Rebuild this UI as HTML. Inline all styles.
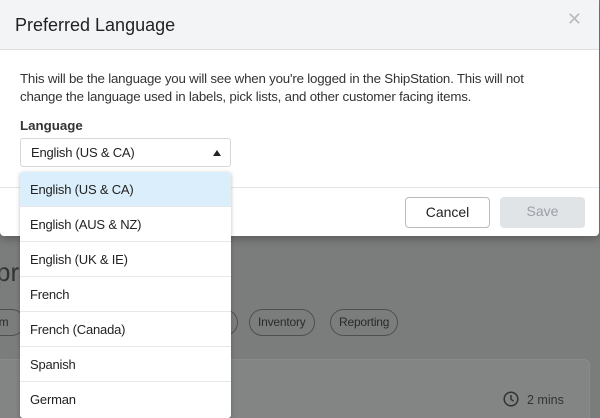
<!DOCTYPE html>
<html style="overflow:hidden;width:600px;height:418px"><head><style>
*{box-sizing:border-box;margin:0;padding:0}
body{width:600px;height:418px;overflow:hidden;background:#7b7c7c;font-family:"Liberation Sans",sans-serif;position:relative;color:#222}
.bgt{position:absolute;color:#333}
.pill{position:absolute;top:309px;height:27px;border:1px solid #4e4f50;border-radius:14px;font-size:12px;line-height:25px;padding:0 8px;color:#2a2a2a;letter-spacing:-0.2px}
.card{position:absolute;left:-10px;top:359px;width:600px;height:59px;background:#838484;border:1px solid #8a8b8b;border-bottom:none;border-radius:6px 6px 0 0}
.modal{position:absolute;left:0;top:0;width:599px;height:236px;background:#fff;border-radius:0 0 4px 4px;box-shadow:0 2px 10px rgba(0,0,0,.3)}
.hdr{height:50px;background:#f3f4f5;border-bottom:1px solid #dcdfe2;padding:15px 15px;font-size:18px;color:#222}
.x{position:absolute;right:17px;top:9px;font-size:18px;color:#b8bcc0}
.txt{position:absolute;left:20px;top:70px;font-size:13.3px;letter-spacing:-0.2px;line-height:18px;color:#333;width:530px}
.lbl{position:absolute;left:20px;top:118px;font-size:13.3px;font-weight:bold;color:#333}
.sel{position:absolute;left:20px;top:138px;width:211px;height:29px;border:1px solid #d5d8db;border-radius:3px;font-size:13px;letter-spacing:-0.2px;padding:6px 10px;color:#222}
.tri{position:absolute;right:9px;top:11px;width:0;height:0;border-left:4px solid transparent;border-right:4px solid transparent;border-bottom:6px solid #222}
.ftr{position:absolute;left:0;top:187px;width:599px;border-top:1px solid #e3e5e7}
.btn{position:absolute;top:197px;height:31px;width:85px;border-radius:4px;font-size:14px;text-align:center;line-height:29px}
.dd{position:absolute;left:20px;top:172px;width:211px;height:246px;background:#fff;border-radius:3px;box-shadow:0 1px 4px rgba(0,0,0,.25);overflow:hidden}
.opt{height:35px;border-bottom:1px solid #e6e8ea;font-size:13px;letter-spacing:-0.2px;line-height:35px;padding-left:10px;color:#222}
</style></head><body>
<div class="bgt" style="left:-4px;top:257px;font-size:26px">pr</div>
<div class="pill" style="left:-20px;width:45px">tom</div>
<div class="pill" style="left:200px;width:38px"></div>
<div class="pill" style="left:249px;">Inventory</div>
<div class="pill" style="left:330px;">Reporting</div>
<div class="card"></div>
<svg style="position:absolute;left:503px;top:391px" width="16" height="16" viewBox="0 0 16 16"><circle cx="8" cy="8" r="6.8" fill="none" stroke="#333" stroke-width="1.5"/><path d="M8 4v4.3l2.5 1.8" fill="none" stroke="#333" stroke-width="1.5"/></svg>
<div class="bgt" style="left:527px;top:393px;font-size:12.5px">2 mins</div>
<div class="modal">
<div class="hdr">Preferred Language</div>
<div class="x">✕</div>
<div class="txt">This will be the language you will see when you're logged in the ShipStation. This will not change the language used in labels, pick lists, and other customer facing items.</div>
<div class="lbl">Language</div>
<div class="sel">English (US &amp; CA)<div class="tri"></div></div>
<div class="ftr"></div>
<div class="btn" style="left:405px;border:1px solid #b8bcc0;color:#222">Cancel</div>
<div class="btn" style="left:500px;background:#e1e4e7;color:#9aa0a6">Save</div>
</div>
<div class="dd">
<div class="opt" style="background:#dbeefb">English (US &amp; CA)</div>
<div class="opt">English (AUS &amp; NZ)</div>
<div class="opt">English (UK &amp; IE)</div>
<div class="opt">French</div>
<div class="opt">French (Canada)</div>
<div class="opt">Spanish</div>
<div class="opt" style="border:none">German</div>
</div>
</body></html>
